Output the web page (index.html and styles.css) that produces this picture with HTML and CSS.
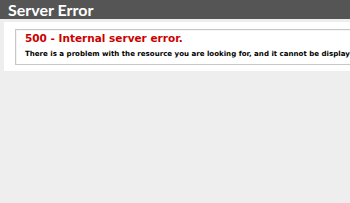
FILE: index.html
```html
<!DOCTYPE html>
<html>
<head>
<meta charset="utf-8">
<title>IIS 500 Error</title>
<link rel="stylesheet" href="styles.css">
</head>
<body>
<div class="header"><h1>Server Error</h1></div>
<div class="content">
  <div class="content-container">
    <fieldset class="box">
      <h2>500 - Internal server error.</h2>
      <h3>There is a problem with the resource you are looking for, and it cannot be displayed.</h3>
    </fieldset>
  </div>
</div>
</body>
</html>
```

FILE: styles.css
```css
html, body {
  margin: 0;
  padding: 0;
  background: #eeeeee;
  font-family: "DejaVu Sans", Verdana, sans-serif;
  overflow: hidden;
}
.header {
  background: #555555;
  height: 19px;
  padding: 0 8px;
  display: flex;
  align-items: center;
}
.header h1 {
  margin: 0;
  color: #fff;
  font-family: Lato, "DejaVu Sans", sans-serif;
  font-size: 16px;
  font-weight: bold;
  line-height: 19px;
}
.content {
  margin: 0 0 0 4px;
}
.content-container {
  background: #fff;
  margin-top: 3px;
  padding: 7px 11px 6px 11px;
  width: 600px;
}
.box {
  margin: 0;
  border: 1px solid #c8c8c8;
  box-shadow: inset 1px 1px 0 #f4f4f4;
  padding: 2px 9px 6px 9px;
}
.box h2 {
  margin: 0;
  color: #cc0000;
  font-size: 10.5px;
  font-weight: bold;
  line-height: 13px;
  white-space: nowrap;
}
.box h3 {
  margin: 4px 0 0 0;
  color: #000;
  font-size: 7.05px;
  font-weight: bold;
  line-height: 9px;
  white-space: nowrap;
}
```
